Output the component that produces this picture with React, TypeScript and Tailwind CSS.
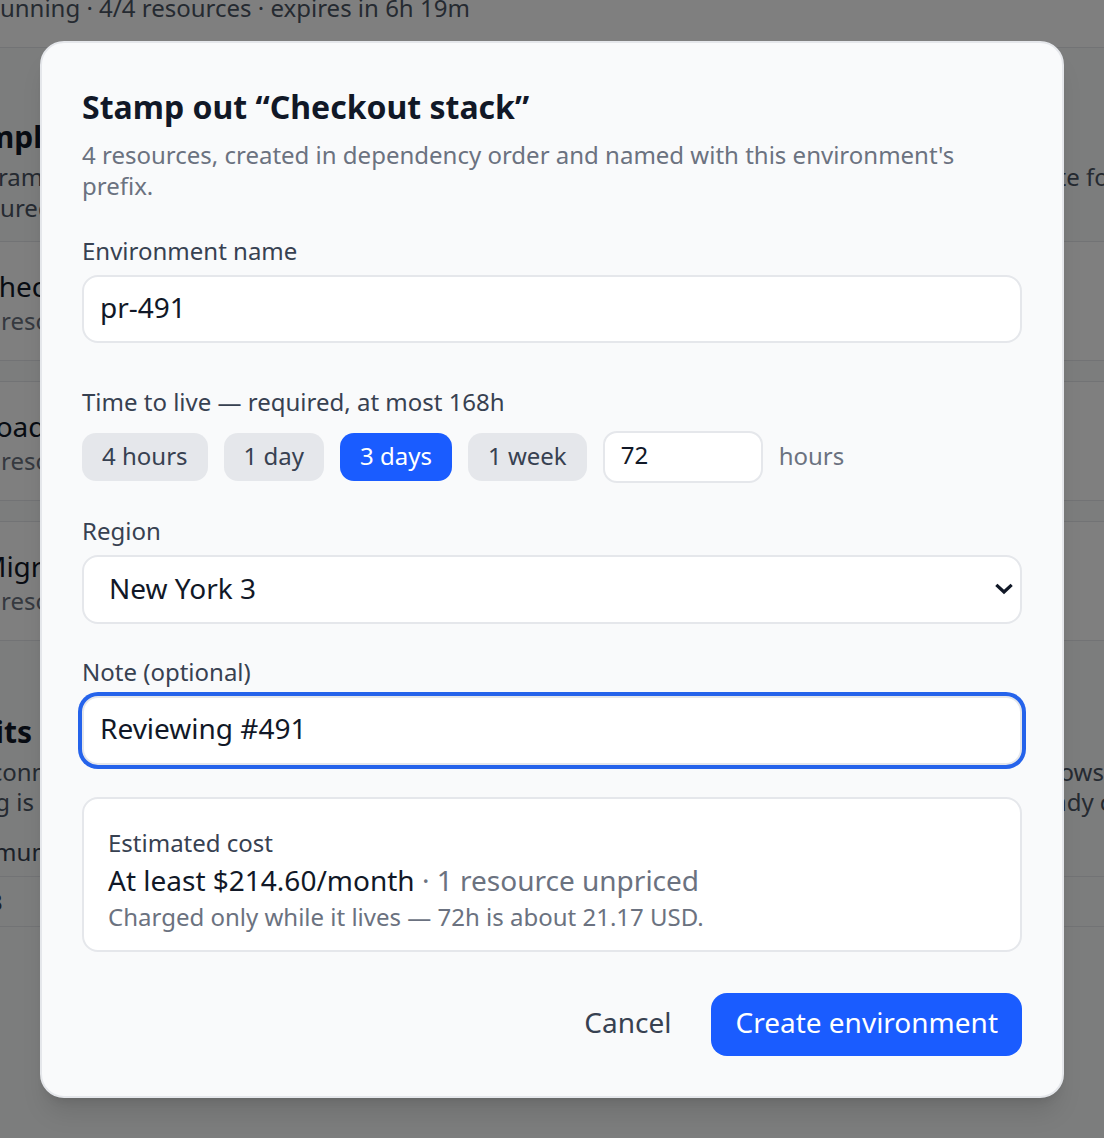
import React from "react";

function Chevron() {
  return (
    <svg width="18" height="12" viewBox="0 0 18 12" fill="none" aria-hidden="true">
      <path d="M2.5 3 L9 9 L15.5 3" stroke="#111827" strokeWidth="3.2" strokeLinecap="square" strokeLinejoin="miter" />
    </svg>
  );
}

function BgCard({ name, sub }: { name: string; sub: string }) {
  return (
    <div className="flex h-[120px] flex-col justify-center border-y border-[#e5e7eb] bg-white px-[41px]">
      <div className="whitespace-nowrap text-[28px] leading-[38px] text-[#111827]">{name}</div>
      <div className="whitespace-nowrap text-[24px] leading-[31px] text-[#6b7280]">{sub}</div>
    </div>
  );
}

export default function App() {
  const chips = ["4 hours", "1 day", "3 days", "1 week"];
  return (
    <div className="relative h-screen w-full overflow-hidden bg-[#f9fafb] font-['Noto_Sans',_sans-serif]">
      {/* page behind the dialog */}
      <div className="ml-[-60px] w-[1224px]">
        <div className="flex h-[48px] flex-col justify-end border-b border-[#e5e7eb] bg-white pb-[24px] pl-[45px]">
          <div className="whitespace-nowrap text-[24px] leading-[31px] text-[#4b5563]">
            Running · 4/4 resources · expires in 6h 19m
          </div>
        </div>

        <h2 className="mt-[69px] whitespace-nowrap pl-[12px] text-[30px] font-bold leading-[40px] text-[#111827]">
          Templates
        </h2>
        <div className="mt-[4px] text-[24px] leading-[31px] text-[#4b5563]">
          <div className="flex justify-between whitespace-nowrap pl-[6px]">
            <span>Diagrams of resources created together, in dependency order.</span>
            <span className="mr-[-10px]">Stamp one out to create a template for a PR</span>
          </div>
          <div className="ml-[-10px] flex justify-between whitespace-nowrap">
            <span>configured once and reused for every preview environment.</span>
            <span></span>
          </div>
        </div>

        <div className="mt-[18px] flex flex-col gap-[20px]">
          <BgCard name="Checkout stack" sub="4 resources · api, worker, postgres, redis" />
          <BgCard name="Load test rig" sub="3 resources · runner, metrics, bucket" />
          <BgCard name="Migration job" sub="2 resources · job, postgres" />
        </div>

        <h2 className="mt-[71px] whitespace-nowrap text-[30px] font-bold leading-[40px] text-[#111827]">
          Limits
        </h2>
        <div className="mt-[5px] text-[24px] leading-[30px] text-[#4b5563]">
          <div className="ml-[-12px] flex justify-between whitespace-nowrap">
            <span>Most connections and storage apply per environment.</span>
            <span className="mr-[-6px]">this allows a few</span>
          </div>
          <div className="flex justify-between whitespace-nowrap">
            <span>Billing is per hour, while an environment is alive.</span>
            <span>billed as ready costs.</span>
          </div>
        </div>
        <div className="mt-[10px] text-[24px] text-[#374151]">
          <div className="flex h-[50px] items-center whitespace-nowrap border-b border-[#e5e7eb]">
            Maximum lifetime · 168h
          </div>
          <div className="flex h-[50px] items-center whitespace-nowrap border-b border-[#e5e7eb]">
            2 of 3
          </div>
        </div>
      </div>

      {/* overlay + dialog */}
      <div className="absolute inset-0 flex items-center justify-center bg-black/50">
        <div className="w-[1024px] rounded-[24px] border-2 border-[#e5e7eb] bg-[#f9fafb] p-10 shadow-xl">
          <h2 className="text-[32px] font-bold leading-[48px] text-[#111827]">Stamp out “Checkout stack”</h2>
          <p className="mt-2 text-[24px] leading-[31px] text-[#6b7280]">
            4 resources, created in dependency order and named with this environment's prefix.
          </p>

          <label className="mt-[34px] block text-[24px] leading-[32px] text-[#374151]">Environment name</label>
          <input
            defaultValue="pr-491"
            className="mt-[8px] block h-[68px] w-full rounded-[16px] border-2 border-[#e5e7eb] bg-white px-4 pb-1 text-[28px] text-[#111827] outline-none"
          />

          <div className="mt-[43px] text-[24px] leading-[32px] text-[#374151]">
            Time to live — required, at most 168h
          </div>
          <div className="mt-[13px] flex h-[52px] items-center gap-4">
            {chips.map((c) => (
              <button
                key={c}
                className={
                  c === "3 days"
                    ? "h-[48px] rounded-[14px] bg-[#1a5cff] px-5 pb-[2px] text-[24px] leading-[32px] text-white"
                    : "h-[48px] rounded-[14px] bg-[#e5e7eb] px-5 pb-[2px] text-[24px] leading-[32px] text-[#374151]"
                }
              >
                {c}
              </button>
            ))}
            <input
              defaultValue="72"
              className="h-[52px] w-[160px] rounded-[14px] border-2 border-[#e5e7eb] bg-white px-4 pb-1 text-[24px] text-[#111827] outline-none"
            />
            <span className="pb-[2px] text-[24px] leading-[32px] text-[#6b7280]">hours</span>
          </div>

          <label className="mt-[32px] block text-[24px] leading-[32px] text-[#374151]">Region</label>
          <div className="relative mt-[8px]">
            <select
              defaultValue="nyc3"
              className="block h-[69px] w-full appearance-none rounded-[16px] border-2 border-[#e5e7eb] bg-white pb-[2px] pl-[25px] pr-12 text-[28px] text-[#111827] outline-none"
            >
              <option value="nyc3">New York 3</option>
              <option value="sfo3">San Francisco 3</option>
              <option value="ams3">Amsterdam 3</option>
            </select>
            <div className="pointer-events-none absolute right-[9px] top-1/2 -translate-y-1/2">
              <Chevron />
            </div>
          </div>

          <label className="mt-[32px] block text-[24px] leading-[32px] text-[#374151]">Note (optional)</label>
          <input
            defaultValue="Reviewing #491"
            className="mt-[8px] block h-[69px] w-full rounded-[16px] border-2 border-[#e5e7eb] bg-white px-4 pb-1 text-[28px] text-[#111827] outline-none ring-4 ring-[#2563eb]"
          />

          <div className="mt-[32px] rounded-[16px] border-2 border-[#e5e7eb] bg-white px-6 pb-[16px] pt-[27px]">
            <div className="text-[24px] leading-[34px] text-[#374151]">Estimated cost</div>
            <div className="text-[28px] leading-[40px] text-[#111827]">
              At least $214.60/month <span className="text-[#6b7280]">· 1 resource unpriced</span>
            </div>
            <div className="text-[24px] leading-[34px] text-[#6b7280]">
              Charged only while it lives — 72h is about 21.17 USD.
            </div>
          </div>

          <div className="mt-[41px] flex justify-end gap-[16px]">
            <button className="h-[63px] px-6 pb-1 text-[28px] text-[#374151]">Cancel</button>
            <button className="h-[63px] rounded-[16px] bg-[#1a5cff] px-6 pb-1 text-[28px] text-white">
              Create environment
            </button>
          </div>
        </div>
      </div>
    </div>
  );
}
